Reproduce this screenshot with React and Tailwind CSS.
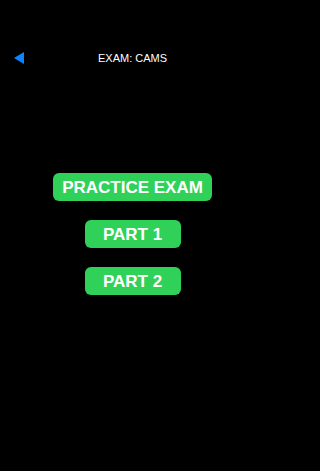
import React from "react";

const buttons = [
  { label: "PRACTICE EXAM", width: "w-[159px]" },
  { label: "PART 1", width: "w-[96px]" },
  { label: "PART 2", width: "w-[96px]" },
];

export default function App() {
  return (
    <div
      className="w-full h-screen bg-black text-white overflow-hidden"
      style={{ fontFamily: '"Liberation Sans", Arial, sans-serif' }}
    >
      <div className="w-[265px] pt-[36px]">
        {/* Nav bar */}
        <div className="relative flex items-center justify-center h-[44px]">
          <button className="absolute left-[14px] top-[16px]">
            <svg width="10" height="12" viewBox="0 0 10 12">
              <path d="M0 6 L10 0 L10 12 Z" fill="#0a84ff" />
            </svg>
          </button>
          <span className="text-[11px] leading-none">EXAM: CAMS</span>
        </div>

        {/* Menu */}
        <div className="flex flex-col items-center gap-[19px] mt-[93px]">
          {buttons.map((b) => (
            <button
              key={b.label}
              className={`${b.width} h-[28px] rounded-[6px] bg-[#30d158] text-white font-bold text-[17px] leading-none flex items-center justify-center`}
            >
              {b.label}
            </button>
          ))}
        </div>
      </div>
    </div>
  );
}
